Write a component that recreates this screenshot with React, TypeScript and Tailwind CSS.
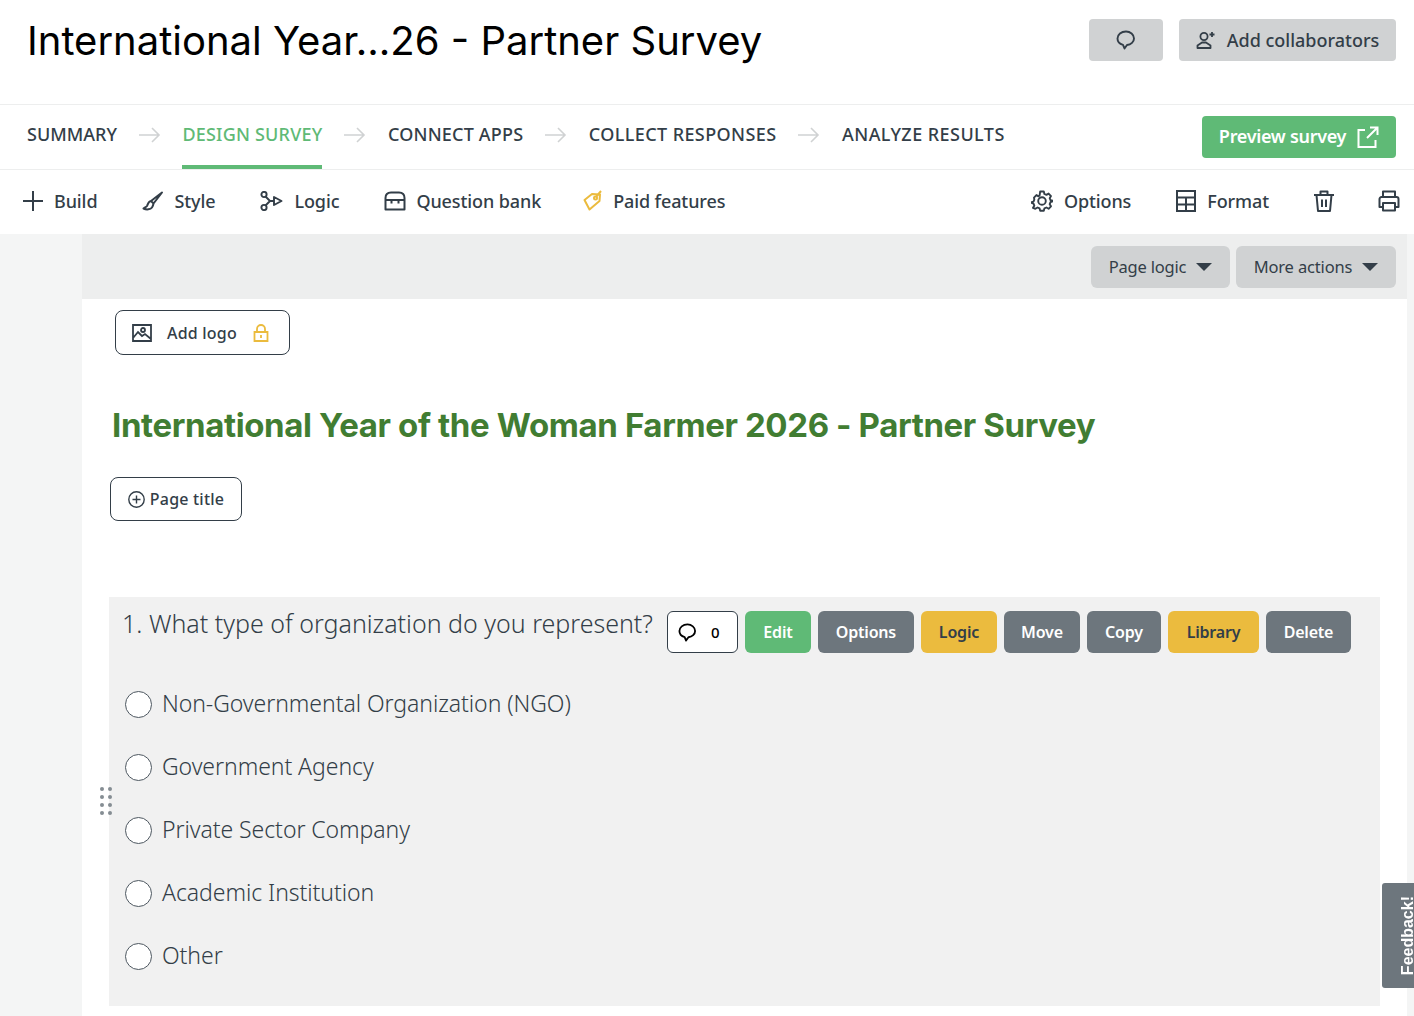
import React from 'react';

const Arrow = () => (
  <svg width="24" height="18" viewBox="0 0 24 18" fill="none" stroke="#d0d2d3" strokeWidth="1.6" className="shrink-0">
    <path d="M1 9h20M14 2l7 7-7 7" />
  </svg>
);

const Bubble = ({ color = '#333e48', size = 20 }: { color?: string; size?: number }) => (
  <svg width={size} height={size} viewBox="0 0 20 20" fill="none" stroke={color} strokeWidth="1.9" strokeLinejoin="round">
    <path d="M10 1.500c-4.800 0-8.500 3-8.500 7 0 3 2.300 5.500 5.500 6.300l1.500 3.700 2.500-3.500c4-.4 7-3.200 7-6.500 0-4-3.700-7-8-7z" />
  </svg>
);

const steps = [
  { label: 'SUMMARY', track: 'tracking-[0px]' },
  { label: 'DESIGN SURVEY', track: 'tracking-[0.2px]', active: true },
  { label: 'CONNECT APPS', track: 'tracking-[0.2px]' },
  { label: 'COLLECT RESPONSES', track: 'tracking-[0.4px]' },
  { label: 'ANALYZE RESULTS', track: 'tracking-[0.45px]' },
];

const qButtons = [
  { label: 'Edit', cls: 'w-[66px] bg-[#5fba76] text-white' },
  { label: 'Options', cls: 'w-[96px] bg-[#6d767d] text-white' },
  { label: 'Logic', cls: 'w-[76px] bg-[#ebbb3e] text-[#333e48]' },
  { label: 'Move', cls: 'w-[76px] bg-[#6d767d] text-white' },
  { label: 'Copy', cls: 'w-[74px] bg-[#6d767d] text-white' },
  { label: 'Library', cls: 'w-[91px] bg-[#ebbb3e] text-[#333e48]' },
  { label: 'Delete', cls: 'w-[85px] bg-[#6d767d] text-white' },
];

const answers = [
  'Non-Governmental Organization (NGO)',
  'Government Agency',
  'Private Sector Company',
  'Academic Institution',
  'Other',
];

const ToolItem = ({ icon, label, cls }: { icon: React.ReactNode; label: string; cls: string }) => (
  <div className={`flex items-center ${cls}`}>
    {icon}
    <span className="text-[18px] font-medium tracking-[-0.1px]">{label}</span>
  </div>
);

export default function App() {
  return (
    <div className="relative h-[1016px] w-[1414px] overflow-hidden bg-white text-[#333e48] font-['Noto_Sans','Open_Sans',sans-serif]">
      {/* title row */}
      <div className="flex h-[105px] items-start justify-between border-b border-[#edeeee] pl-[27px] pr-[18px] pt-[19px]">
        <h1 className="mt-[-4px] font-['Inter',sans-serif] text-[40px] font-normal leading-[52px] text-black">International Year...26 - Partner Survey</h1>
        <div className="flex gap-4">
          <button className="flex h-[42px] w-[74px] items-center justify-center rounded bg-[#d0d2d3]"><Bubble size={20} /></button>
          <button className="flex h-[42px] w-[217px] items-center justify-center gap-[11px] rounded bg-[#d0d2d3] text-[18px] font-medium">
            <svg width="20" height="20" viewBox="0 0 20 20" fill="none" stroke="#333e48" strokeWidth="1.800" strokeLinejoin="round">
              <circle cx="8" cy="6.500" r="3.600" /><path d="M1.500 18v-2.500L6 12.500h4l4.500 3V18zM16 2v5M13.500 4.500h5" />
            </svg>
            Add collaborators
          </button>
        </div>
      </div>

      {/* steps */}
      <div className="flex h-[65px] items-stretch justify-between border-b border-[#edeeee] pl-[27px] pr-[18px]">
        <div className="flex items-stretch gap-[20.75px]">
          {steps.map((s, i) => (
            <React.Fragment key={s.label}>
              {i > 0 && <div className="flex items-center pb-[4px]"><Arrow /></div>}
              <div className={`flex items-center whitespace-nowrap border-b-[4px] pb-[2px] text-[18px] font-medium ${s.track} ${s.active ? 'border-[#5fba76] text-[#5fba76]' : 'border-transparent'}`}>{s.label}</div>
            </React.Fragment>
          ))}
        </div>
        <div className="flex items-center pb-[1px]">
          <button className="flex h-[42px] w-[194px] items-center justify-center gap-[11px] rounded bg-[#5fba76] text-[18px] font-semibold tracking-[-0.3px] text-white">
            Preview survey
            <svg width="22" height="22" viewBox="0 0 22 22" fill="none" stroke="white" strokeWidth="2">
              <path d="M8 4H1.500v17h17v-7M13 1.500h7.500V9M20.500 1.500L10 12" />
            </svg>
          </button>
        </div>
      </div>

      {/* toolbar */}
      <div className="flex h-[64px] items-center justify-between pb-[2px] pl-[23px] pr-[14px]">
        <div className="flex items-center">
          <ToolItem label="Build" cls="gap-[11px] mr-[45px]" icon={
            <svg width="20" height="20" viewBox="0 0 20 20" fill="none" stroke="#333e48" strokeWidth="2"><path d="M10 0v20M0 10h20" /></svg>
          } />
          <ToolItem label="Style" cls="gap-[10px] mr-[45px]" icon={
            <svg width="22" height="20" viewBox="0 0 22 20" fill="none" stroke="#333e48" strokeWidth="2" strokeLinejoin="round"><path d="M20 1.500L9 10l2.500 2.500zM9 10c-3 .5-3 3.500-4 5-.7 1-2.500 1.500-3.500 2.500 3 1.500 7 1 8.500-1 1-1.300 1.500-4 1.500-4" /></svg>
          } />
          <ToolItem label="Logic" cls="gap-[11px] mr-[45px]" icon={
            <svg width="23" height="20" viewBox="0 0 23 20" fill="none" stroke="#333e48" strokeWidth="1.900" strokeLinejoin="round"><circle cx="4" cy="3.500" r="2.600" /><circle cx="4" cy="16.500" r="2.600" /><path d="M5.500 5.500L10 10l-4.500 4.500M10 10h4M14 6l7.500 4-7.500 4z" /></svg>
          } />
          <ToolItem label="Question bank" cls="gap-[10px] mr-[42px]" icon={
            <svg width="22" height="20" viewBox="0 0 22 20" fill="none" stroke="#333e48" strokeWidth="2" strokeLinejoin="round"><path d="M1.500 18.500V7C1.500 3.500 3.500 1.500 7 1.500h8c3.500 0 5.500 2 5.500 5.500v11.500zM1.500 9h19M7.500 9v3.500M14.500 9v3.500" /></svg>
          } />
          <ToolItem label="Paid features" cls="gap-[9px]" icon={
            <svg width="21" height="22" viewBox="0 0 21 22" fill="none" stroke="#ebbb3e" strokeWidth="2" strokeLinejoin="round"><path d="M1.500 10L9 4l8 .5-.5 6.500-10 8.500z" /><circle cx="12.500" cy="8" r="1.500" /><path d="M13 7l5-6" /></svg>
          } />
        </div>
        <div className="flex items-center">
          <ToolItem label="Options" cls="gap-[11px] mr-[45px]" icon={
            <svg width="22" height="22" viewBox="0 0 22 22" fill="none" stroke="#333e48" strokeWidth="1.900" strokeLinejoin="round"><circle cx="11" cy="11" r="3.800" /><path d="M9.200 1.500h3.600l.6 2.500 2 .9 2.200-1.300 2.400 2.500-1.300 2.100.8 2 2.200.5v.6l-2.200.9-.8 2 1.300 2.100-2.400 2.500-2.200-1.300-2 .9-.6 2.300H9.200l-.6-2.300-2-.9-2.200 1.300L2 17.800l1.300-2.100-.8-2-2-.9v-.6l2-.5.800-2L3 7.600l2.400-2.500 2.200 1.300 1-1z" /></svg>
          } />
          <ToolItem label="Format" cls="gap-[11px] mr-[44px]" icon={
            <svg width="20" height="22" viewBox="0 0 20 22" fill="none" stroke="#333e48" strokeWidth="2"><path d="M1 1h18v20H1zM1 7.500h18M1 14.500h18M10 7.500V21" /></svg>
          } />
          <svg width="22" height="22" viewBox="0 0 22 22" fill="none" stroke="#333e48" strokeWidth="2" strokeLinejoin="round" className="mr-[43px]"><path d="M1 5h20M7.500 5V1.500h7V5M3.500 5l1.500 16h12l1.500-16M9 9.500v7.500M13 9.500v7.500" /></svg>
          <svg width="22" height="22" viewBox="0 0 22 22" fill="none" stroke="#333e48" strokeWidth="2" strokeLinejoin="round"><path d="M5 7V1.500h12V7M5 17H1.500V9a2 2 0 0 1 2-2h15a2 2 0 0 1 2 2v8H17M5 13h12v7.500H5z" /></svg>
        </div>
      </div>

      {/* canvas */}
      <div className="flex h-[783px] bg-[#f4f5f5]">
        <div className="w-[82px] shrink-0" />
        <div className="w-[1325px] bg-white">
          <div className="flex h-[65px] items-start justify-end gap-[6px] bg-[#edeeee] pr-[11px] pt-[12px]">
            <button className="flex h-[42px] w-[139px] items-center justify-center gap-[10px] rounded-md bg-[#d0d2d3] text-[16.5px] tracking-[-0.2px]">Page logic
              <span className="h-0 w-0 border-x-[8px] border-t-[8px] border-x-transparent border-t-[#333e48]" />
            </button>
            <button className="flex h-[42px] w-[160px] items-center justify-center gap-[10px] rounded-md bg-[#d0d2d3] text-[16.5px] tracking-[-0.15px]">More actions
              <span className="h-0 w-0 border-x-[8px] border-t-[8px] border-x-transparent border-t-[#333e48]" />
            </button>
          </div>

          <div className="pl-[33px] pt-[11px]">
            <button className="flex h-[45px] w-[175px] items-center rounded-lg border border-[#333e48] pl-[16px] text-[16px] font-medium tracking-[0.2px]">
              <svg width="20" height="18" viewBox="0 0 20 18" fill="none" stroke="#333e48" strokeWidth="1.800" className="mr-[15px]"><path d="M1 1h18v16H1zM1 14l5-6 4 4 3-2 6 5" /><circle cx="11" cy="6" r="2" /></svg>
              Add logo
              <svg width="16" height="18" viewBox="0 0 16 18" fill="none" stroke="#ebbb3e" strokeWidth="1.800" className="ml-[16px]"><path d="M1.500 8h13v9h-13zM4 8V5a4 4 0 0 1 8 0v3M8 11v3" /></svg>
            </button>
          </div>

          <h2 className="ml-[30px] mt-[48px] h-[44px] font-['Inter',sans-serif] text-[33px] font-bold leading-[44px] tracking-[-0.38px] text-[#417d32]">International Year of the Woman Farmer 2026 - Partner Survey</h2>

          <button className="ml-[28px] mt-[30px] flex h-[44px] w-[132px] items-center justify-center gap-[5px] rounded-lg border border-[#333e48] text-[16px] font-medium tracking-[0.2px]">
            <svg width="17" height="17" viewBox="0 0 17 17" fill="none" stroke="#333e48" strokeWidth="1.400"><circle cx="8.500" cy="8.500" r="7.700" /><path d="M8.500 4.500v8M4.500 8.500h8" /></svg>
            Page title
          </button>

          <div className="relative ml-[27px] mt-[76px] h-[409px] w-[1271px] bg-[#f1f1f1] pl-[14px] pt-[14px]">
            <div className="flex items-start">
              <span className="ml-[-1px] mt-[-6px] text-[25px] font-light text-[#333e48]">1. What type of organization do you represent?</span>
              <div className="ml-[14px] flex gap-[7px]">
                <button className="flex h-[42px] w-[71px] items-center gap-[14px] rounded-md border border-[#333e48] bg-white pl-[10px] text-[15px] font-medium text-black">
                  <Bubble color="#000" size={19} />0
                </button>
                {qButtons.map((b) => (
                  <button key={b.label} className={`flex h-[42px] items-center justify-center rounded-md text-[16px] font-semibold tracking-[-0.2px] ${b.cls}`}>{b.label}</button>
                ))}
              </div>
            </div>
            <div className="mt-[32px] flex flex-col gap-[27px] pl-[2px]">
              {answers.map((a) => (
                <div key={a} className="flex h-[36px] items-center gap-[10px]">
                  <span className="mt-[2px] h-[27px] w-[27px] shrink-0 rounded-full border-[1.500px] border-[#4d5760] bg-white" />
                  <span className="text-[23px] font-light leading-[36px] tracking-[-0.06px] text-[#333e48]">{a}</span>
                </div>
              ))}
            </div>
            {/* drag handle */}
            <div className="absolute left-[-9px] top-[190px] grid grid-cols-2 gap-x-[4px] gap-y-[4px]">
              {Array.from({ length: 8 }).map((_, i) => (
                <span key={i} className="h-[4px] w-[4px] rounded-full bg-[#858d93]" />
              ))}
            </div>
          </div>
        </div>
        <div className="flex-1" />
      </div>

      {/* feedback tab */}
      <div className="fixed bottom-[28px] right-0 flex h-[105px] w-[32px] items-center rounded-l-[3px] bg-[#6d767d] pl-[17px]">
        <span className="rotate-180 whitespace-nowrap font-['Liberation_Sans',sans-serif] text-[16px] font-bold leading-[18px] text-white [writing-mode:vertical-rl]">Feedback!</span>
      </div>
    </div>
  );
}
